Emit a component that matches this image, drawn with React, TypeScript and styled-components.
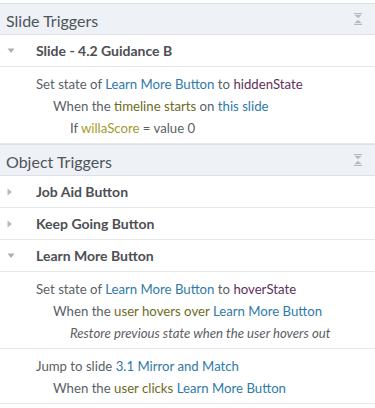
import React from 'react';
import styled, { createGlobalStyle } from 'styled-components';

const GlobalStyle = createGlobalStyle`
  html, body {
    margin: 0;
    padding: 0;
    background: #ffffff;
  }
  body {
    font-family: Lato, 'Liberation Sans', sans-serif;
  }
`;

type Tone = 'plain' | 'link' | 'state' | 'event' | 'var';

type Part = [string, Tone?];

interface iLine {
  indent: number;
  parts: Part[];
  italic?: boolean;
}

interface iAction {
  lines: iLine[];
}

interface iTrigger {
  label: string;
  open: boolean;
  actions: iAction[];
}

const slideTriggers: iTrigger[] = [
  {
    label: 'Slide - 4.2 Guidance B',
    open: true,
    actions: [
      {
        lines: [
          {
            indent: 0,
            parts: [['Set state of '], ['Learn More Button', 'link'], [' to '], ['hiddenState', 'state']],
          },
          {
            indent: 1,
            parts: [['When the '], ['timeline starts', 'event'], [' on '], ['this slide', 'link']],
          },
          {
            indent: 2,
            parts: [['If '], ['willaScore', 'var'], [' = value 0']],
          },
        ],
      },
    ],
  },
];

const objectTriggers: iTrigger[] = [
  { label: 'Job Aid Button', open: false, actions: [] },
  { label: 'Keep Going Button', open: false, actions: [] },
  {
    label: 'Learn More Button',
    open: true,
    actions: [
      {
        lines: [
          {
            indent: 0,
            parts: [['Set state of '], ['Learn More Button', 'link'], [' to '], ['hoverState', 'state']],
          },
          {
            indent: 1,
            parts: [['When the '], ['user hovers over', 'event'], [' '], ['Learn More Button', 'link']],
          },
          {
            indent: 2,
            italic: true,
            parts: [['Restore previous state when the user hovers out']],
          },
        ],
      },
      {
        lines: [
          {
            indent: 0,
            parts: [['Jump to slide '], ['3.1 Mirror and Match', 'link']],
          },
          {
            indent: 1,
            parts: [['When the '], ['user clicks', 'event'], [' '], ['Learn More Button', 'link']],
          },
        ],
      },
    ],
  },
];

const toneColors: Record<Tone, string> = {
  plain: '#5a5f66',
  link: '#2f7aa8',
  state: '#5e2f5c',
  event: '#6d6b1c',
  var: '#a39a2c',
};

const CollapseIcon = () => (
  <svg width="10" height="12" viewBox="0 0 10 12">
    <rect x="1" y="0" width="8" height="1.2" fill="#b7bcc2" />
    <path d="M1.5 2 L8.5 2 L5 5.2 Z" fill="#b7bcc2" />
    <path d="M1.5 10 L8.5 10 L5 6.8 Z" fill="#b7bcc2" />
    <rect x="1" y="10.8" width="8" height="1.2" fill="#b7bcc2" />
  </svg>
);

const Caret = ({ open }: { open: boolean }) =>
  open ? (
    <svg width="8" height="6" viewBox="0 0 8 6">
      <path d="M0.5 0.5 L7.5 0.5 L4 5 Z" fill="#a9aeb4" />
    </svg>
  ) : (
    <svg width="6" height="8" viewBox="0 0 6 8">
      <path d="M0.5 0.5 L5 4 L0.5 7.5 Z" fill="#b5b9be" />
    </svg>
  );

const Section = ({ title, triggers }: { title: string; triggers: iTrigger[] }) => (
  <Panel>
    <Header>
      <HeaderTitle>{title}</HeaderTitle>
      <CollapseIcon />
    </Header>
    {triggers.map((t) => (
      <div key={t.label}>
        <TriggerRow>
          <CaretBox>
            <Caret open={t.open} />
          </CaretBox>
          <TriggerLabel>{t.label}</TriggerLabel>
        </TriggerRow>
        {t.open &&
          t.actions.map((a, i) => (
            <Action key={i}>
              {a.lines.map((l, j) => (
                <Line key={j} indent={l.indent} italic={l.italic}>
                  {l.parts.map(([text, tone], k) => (
                    <Word key={k} tone={tone || 'plain'}>
                      {text}
                    </Word>
                  ))}
                </Line>
              ))}
            </Action>
          ))}
      </div>
    ))}
  </Panel>
);

const App = () => (
  <>
    <GlobalStyle />
    <Page>
      <Section title="Slide Triggers" triggers={slideTriggers} />
      <Section title="Object Triggers" triggers={objectTriggers} />
    </Page>
  </>
);

const Page = styled.div`
  width: 375px;
  padding-top: 3px;
  background: #ffffff;
`;

const Panel = styled.div`
  display: flex;
  flex-direction: column;
`;

const Header = styled.div`
  height: 30px;
  display: flex;
  align-items: center;
  justify-content: space-between;
  padding: 0 12px 0 6px;
  background: #eef1f5;
  border-top: 1px solid #dde1e6;
  border-bottom: 1px solid #dde1e6;
`;

const HeaderTitle = styled.div`
  font-size: 16px;
  color: #4f555c;
  padding-top: 2px;
`;

const TriggerRow = styled.div`
  height: 31px;
  display: flex;
  align-items: center;
  border-bottom: 1px solid #e6e8eb;
`;

const CaretBox = styled.div`
  width: 36px;
  display: flex;
  justify-content: flex-start;
  padding-left: 7px;
  box-sizing: border-box;
`;

const TriggerLabel = styled.div`
  font-size: 14px;
  font-weight: 700;
  color: #4c4f54;
`;

const Action = styled.div`
  display: flex;
  flex-direction: column;
  padding: 6px 0 4px 36px;
  border-bottom: 1px solid #e6e8eb;
`;

const Line = styled.div<{ indent: number; italic?: boolean }>`
  font-size: 13.2px;
  line-height: 22px;
  white-space: nowrap;
  padding-left: ${(p) => p.indent * 17}px;
  font-style: ${(p) => (p.italic ? 'italic' : 'normal')};
  color: ${(p) => (p.italic ? '#5c6065' : '#5a5f66')};
`;

const Word = styled.span<{ tone: Tone }>`
  color: ${(p) => (p.tone === 'plain' ? 'inherit' : toneColors[p.tone])};
`;

export default App;
